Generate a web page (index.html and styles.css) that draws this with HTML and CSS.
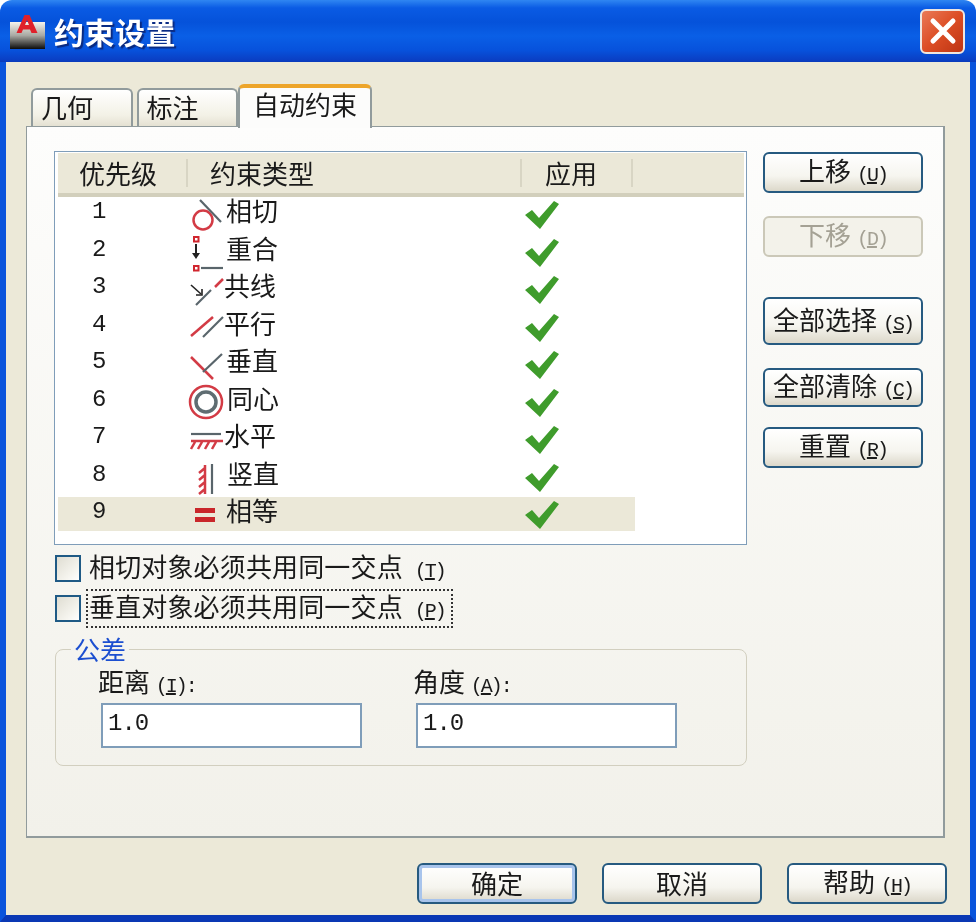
FILE: index.html
```html
<!DOCTYPE html>
<html lang="zh">
<head>
<meta charset="utf-8">
<title>约束设置</title>
<link rel="stylesheet" href="styles.css">
</head>
<body>
<div class="window">
  <header class="titlebar">
    <svg class="app-icon" viewBox="0 0 35 35" width="35" height="35">
      <defs><linearGradient id="appg" x1="0" y1="0" x2="0" y2="1"><stop offset="0" stop-color="#f6f4ec"/><stop offset=".5" stop-color="#a8a8a2"/><stop offset="1" stop-color="#0c0c0c"/></linearGradient></defs>
      <rect x="0" y="7" width="35" height="27" fill="url(#appg)"/>
      <path d="M14.500 0h5l8 18h-6l-1.500-3.500h-7L11.500 18h-5zM15 10h4l-2-5z" fill="#e0202a" fill-rule="evenodd"/>
    </svg>
    <h1 class="title">约束设置</h1>
    <button class="close" aria-label="关闭">
      <svg viewBox="0 0 30 30" width="30" height="30"><path d="M5 5l20 20M25 5L5 25" stroke="#fff" stroke-width="5" stroke-linecap="round"/></svg>
    </button>
  </header>
  <main class="body">
    <nav class="tabs">
      <div class="tab tab-geo">几何</div>
      <div class="tab tab-dim">标注</div>
      <div class="tab tab-active">自动约束</div>
    </nav>
    <section class="panel">
      <div class="left">
        <div class="listbox">
          <div class="list-head">
            <div class="hcell hcell-a">优先级</div>
            <div class="hcell hcell-b">约束类型</div>
            <div class="hcell hcell-c">应用</div>
            <div class="hcell"></div>
          </div>
          <div class="rows">
            <div class="row"><span class="num">1</span>
              <svg class="ic" viewBox="0 0 36 38"><circle cx="15" cy="27" r="9.500" class="r"/><path d="M12 7l21 22" class="g"/></svg>
              <span class="name">相切</span>
              <svg class="chk" viewBox="0 0 36 30"><path d="M1 15l7-5 7 8L30 1l5 3-19 25z"/></svg></div>
            <div class="row"><span class="num">2</span>
              <svg class="ic" viewBox="0 0 36 38"><rect x="6" y="6" width="4.500" height="4.500" class="r2"/><path d="M8 13v13" class="k"/><path d="M4 22h8l-4 6z" fill="#222"/><rect x="6" y="35" width="4.500" height="4.500" class="r2"/><path d="M13 37h22" class="g"/></svg>
              <span class="name">重合</span>
              <svg class="chk" viewBox="0 0 36 30"><path d="M1 15l7-5 7 8L30 1l5 3-19 25z"/></svg></div>
            <div class="row"><span class="num">3</span>
              <svg class="ic" viewBox="0 0 36 38"><path d="M3 17l10 9" class="k1"/><path d="M14 21v6h-6" class="k1"/><path d="M8 37l15-15" class="g"/><path d="M27 19l8-8" class="r"/></svg>
              <span class="name name-tight">共线</span>
              <svg class="chk" viewBox="0 0 36 30"><path d="M1 15l7-5 7 8L30 1l5 3-19 25z"/></svg></div>
            <div class="row"><span class="num">4</span>
              <svg class="ic" viewBox="0 0 36 38"><path d="M3 30l22-19" class="r"/><path d="M15 31l20-20" class="g"/></svg>
              <span class="name name-tight">平行</span>
              <svg class="chk" viewBox="0 0 36 30"><path d="M1 15l7-5 7 8L30 1l5 3-19 25z"/></svg></div>
            <div class="row"><span class="num">5</span>
              <svg class="ic" viewBox="0 0 36 38"><path d="M3 14l22 22" class="r"/><path d="M15 29l19-18" class="g"/></svg>
              <span class="name">垂直</span>
              <svg class="chk" viewBox="0 0 36 30"><path d="M1 15l7-5 7 8L30 1l5 3-19 25z"/></svg></div>
            <div class="row"><span class="num">6</span>
              <svg class="ic" viewBox="0 0 36 38"><circle cx="18" cy="21" r="16" class="r"/><circle cx="18" cy="21" r="10" fill="none" stroke="#5f6d72" stroke-width="3.500"/></svg>
              <span class="name name-wide">同心</span>
              <svg class="chk" viewBox="0 0 36 30"><path d="M1 15l7-5 7 8L30 1l5 3-19 25z"/></svg></div>
            <div class="row"><span class="num">7</span>
              <svg class="ic" viewBox="0 0 36 38"><path d="M3 16h30" class="g"/><path d="M3 23h32M7 24l-4 7M14 24l-4 7M21 24l-4 7M28 24l-4 7" class="r"/></svg>
              <span class="name name-tight">水平</span>
              <svg class="chk" viewBox="0 0 36 30"><path d="M1 15l7-5 7 8L30 1l5 3-19 25z"/></svg></div>
            <div class="row"><span class="num">8</span>
              <svg class="ic" viewBox="0 0 36 38"><path d="M24 8v30" class="g"/><path d="M17 9v29M17 12l-6 5M17 19l-6 5M17 26l-6 5M17 33l-6 5" class="r"/></svg>
              <span class="name name-wide">竖直</span>
              <svg class="chk" viewBox="0 0 36 30"><path d="M1 15l7-5 7 8L30 1l5 3-19 25z"/></svg></div>
            <div class="row row-sel"><span class="num">9</span>
              <svg class="ic" viewBox="0 0 36 38"><rect x="7" y="15" width="20" height="5" fill="#c9262a"/><rect x="7" y="24" width="20" height="5" fill="#c9262a"/></svg>
              <span class="name">相等</span>
              <svg class="chk" viewBox="0 0 36 30"><path d="M1 15l7-5 7 8L30 1l5 3-19 25z"/></svg></div>
          </div>
        </div>
        <label class="check check-first"><input type="checkbox"><span class="check-text">相切对象必须共用同一交点 <span class="mn mn-far">(<u>T</u>)</span></span></label>
        <label class="check"><input type="checkbox"><span class="check-text check-focus">垂直对象必须共用同一交点 <span class="mn mn-far">(<u>P</u>)</span></span></label>
        <fieldset class="group">
          <legend class="legend">公差</legend>
          <div class="fields">
            <div class="field field-a">
              <label class="field-label">距离 <span class="mn">(<u>I</u>):</span></label>
              <input class="text" type="text" value="1.0">
            </div>
            <div class="field">
              <label class="field-label">角度 <span class="mn">(<u>A</u>):</span></label>
              <input class="text" type="text" value="1.0">
            </div>
          </div>
        </fieldset>
      </div>
      <div class="right">
        <button class="btn">上移 <span class="mn">(<u>U</u>)</span></button>
        <button class="btn btn-off gap-a">下移 <span class="mn">(<u>D</u>)</span></button>
        <button class="btn btn-tall gap-b">全部选择 <span class="mn">(<u>S</u>)</span></button>
        <button class="btn btn-short gap-a">全部清除 <span class="mn">(<u>C</u>)</span></button>
        <button class="btn gap-c">重置 <span class="mn">(<u>R</u>)</span></button>
      </div>
    </section>
    <footer class="footer">
      <button class="btn btn-default">确定</button>
      <button class="btn">取消</button>
      <button class="btn">帮助 <span class="mn">(<u>H</u>)</span></button>
    </footer>
  </main>
</div>
</body>
</html>
```
FILE: styles.css
```css
* { box-sizing: border-box; }
html, body { margin: 0; padding: 0; background: #fff; }
body { width: 976px; height: 922px; overflow: hidden; font-family: "Noto Sans CJK SC", "Liberation Sans", sans-serif; font-size: 26px; color: #1a1a1a; }
.window { width: 976px; height: 922px; display: flex; flex-direction: column; filter: blur(.45px); }

.titlebar { height: 62px; flex: none; display: flex; align-items: center; padding: 0 11px 0 10px; gap: 9px; border-radius: 12px 12px 0 0;
  background: linear-gradient(#2f86f2 0, #0a5be4 8px, #0552da 22px, #0a5fe6 36px, #0752dc 50px, #0a3fc4 60px, #0a3aba 62px); }
.app-icon { flex: none; margin-top: 3px; }
.title { margin: 0; font-size: 30px; font-weight: 700; line-height: 1; color: #fff; text-shadow: 2px 2px 1px #0a2a80; letter-spacing: .5px; }
.close { margin-left: auto; width: 45px; height: 45px; padding: 0; border: 2px solid #efe6e0; border-radius: 6px; display: flex; align-items: center; justify-content: center;
  background: linear-gradient(135deg, #ea7a58, #dc4d24 50%, #bd3414); }

.body { flex: 1; display: flex; flex-direction: column; padding: 22px 23px 0 20px; background: #ece9d8; border-left: 6px solid #0a54dc; border-right: 6px solid #0a54dc; border-bottom: 7px solid #0a38b4; }

.tabs { display: flex; align-items: flex-end; height: 42px; padding-left: 5px; }
.tab { height: 38px; border: 2px solid #919b9c; border-bottom: 0; border-radius: 6px 6px 0 0; display: flex; align-items: center; justify-content: center; background: linear-gradient(#fff, #f3f1e6 70%, #e4e1d2); line-height: 1; padding-bottom: 3px; }
.tab-geo { width: 102px; margin-right: 4px; padding-right: 30px; }
.tab-dim { width: 101px; padding-right: 30px; }
.tab-active { width: 134px; height: 44px; margin-bottom: -2px; position: relative; z-index: 1; padding: 0 0 9px; background: #fcfcfb; border-color: #919b9c; border-top: 4px solid #eda52a; }

.panel { height: 712px; margin-right: 2px; flex: none; display: flex; padding: 24px 0 0 27px; border: 1px solid #919b9c; border-right-width: 2px; border-bottom-width: 2px; background: linear-gradient(#fdfdfc, #f2f1ea); }
.left { width: 693px; flex: none; }
.right { margin-left: 16px; width: 160px; padding-top: 1px; display: flex; flex-direction: column; }

.listbox { height: 394px; padding: 1px 2px 0 3px; border: 1px solid #7f9db9; background: #fff; }
.list-head { height: 44px; display: grid; grid-template-columns: 130px 334px 111px 1fr; align-items: center; padding-bottom: 1px; background: #ebe8d8; border-bottom: 4px solid #d2cfbc; }
.hcell { height: 28px; line-height: 28px; border-right: 2px solid #d8d5c4; }
.hcell-a { padding-left: 21px; }
.hcell-b { padding-left: 22px; }
.hcell-c { padding-left: 23px; }
.hcell:last-child { border-right: 0; }

.rows { margin-top: -4px; width: 577px; display: grid; grid-auto-rows: 37.5px; }
.row { display: grid; grid-template-columns: 130px 36px 298px 38px; align-items: center; }
.row-sel { background: linear-gradient(transparent 4px, #ebe8d8 4px, #ebe8d8 37.500px); }
.num { padding-left: 34px; font-family: "Liberation Mono", monospace; font-size: 24px; line-height: 1; }
.ic { width: 36px; height: 38px; display: block; overflow: visible; }
.r { fill: none; stroke: #d33b45; stroke-width: 2.500; }
.g { fill: none; stroke: #59656b; stroke-width: 2.200; }
.k { fill: none; stroke: #222; stroke-width: 2; }
.k1 { fill: none; stroke: #222; stroke-width: 1.600; }
.r2 { fill: #fff; stroke: #d1262f; stroke-width: 2; }
.name { padding: 0 0 4px 2px; line-height: 1; }
.name-tight { padding-left: 0; }
.name-wide { padding-left: 3px; }
.chk { width: 36px; height: 30px; display: block; fill: #3f9c2c; margin: 6px 0 0 2px; }

.mn { font-family: "Liberation Mono", monospace; font-size: 20px; letter-spacing: -2px; }
.mn-far { margin-left: 6px; }

.check { display: flex; align-items: center; height: 27px; margin-top: 13px; margin-left: 1px; }
.check-first { margin-top: 10px; }
.check input { appearance: none; width: 26px; height: 27px; margin: 0 6px 0 0; flex: none; border: 2px solid #1f5a85; background: linear-gradient(135deg, #dfddd2, #f6f5ef 70%, #fff); }
.check-text { padding: 1px 7px 1px 2px; line-height: 29px; white-space: nowrap; letter-spacing: .15px; }
.check-focus { outline: 2px dotted #333; outline-offset: -1px; }

.group { margin: 13px 0 0 1px; padding: 0 0 17px; width: 692px; min-width: 0; border: 1px solid #d2cfbf; border-radius: 8px; }
.legend { margin-left: 15px; padding: 0 3px; color: #1c4fd0; line-height: 28px; font-size: 26px; }
.fields { display: flex; padding: 5px 0 0 45px; }
.field { display: flex; flex-direction: column; width: 261px; }
.field-a { margin-right: 54px; }
.field-label { margin-left: -3px; height: 35px; line-height: 26px; white-space: nowrap; }
.text { width: 261px; height: 45px; padding: 0 5px 5px; border: 2px solid #7f9db9; background: #fff; font-family: "Liberation Mono", monospace; font-size: 24px; letter-spacing: -1px; color: #1a1a1a; outline: 0; }

.btn { width: 160px; height: 41px; flex: none; padding: 0 0 2px; border: 2px solid #265a80; border-radius: 6px; background: linear-gradient(#fff, #f6f5ef 60%, #dcd8ca); font-family: inherit; font-size: 26px; line-height: 1; color: #1a1a1a; white-space: nowrap; }
.btn-off { border-color: #cbc8b8; color: #a4a194; background: #f3f2ea; }
.btn-tall { height: 48px; }
.btn-short { height: 39px; }
.gap-a { margin-top: 23px; }
.gap-b { margin-top: 40px; }
.gap-c { margin-top: 20px; }
.btn-default { box-shadow: inset 0 0 0 3px #a8c4ec; }

.footer { display: flex; justify-content: flex-end; gap: 25px; margin-top: 25px; }
```
